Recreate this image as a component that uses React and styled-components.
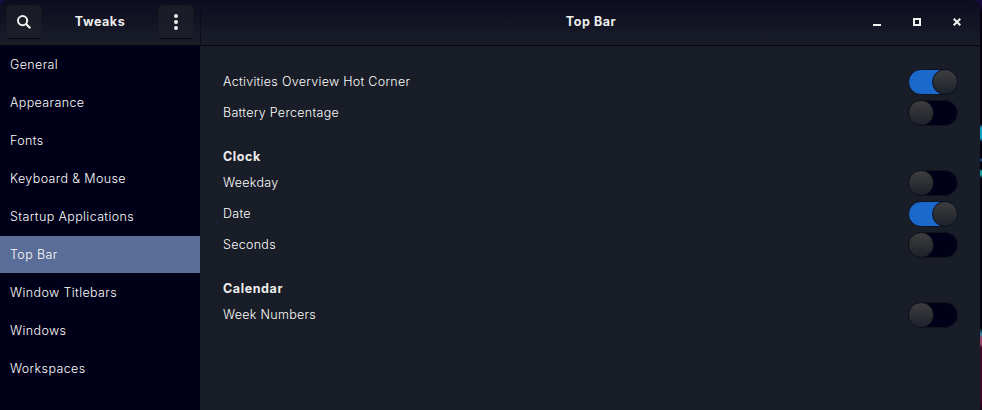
import React, { useState } from "react";
import styled, { createGlobalStyle } from "styled-components";

const GlobalStyle = createGlobalStyle`
  *, *::before, *::after { box-sizing: border-box; }
  body {
    margin: 0;
    overflow: hidden;
    background: #04000a;
    font: 300 12.5px/18px Inter, "Noto Sans", sans-serif;
    letter-spacing: 0.29px;
    color: #fcfcfa;
  }
`;

const Desktop = styled.div`
  display: flex;
  height: 410px;
  width: 982px;
  background: linear-gradient(
    #1a0a43 0 4px, #06000e 12px 124px, #12a0c8 128px 138px, #04000e 142px 158px,
    #1a60a8 160px, #04000e 162px 169px, #12a0a0 171px 175px, #04000e 178px 328px,
    #3080a8 334px, #9a4468 338px 344px, #3c0a22 348px 400px, #1c0618
  );
`;

const Window = styled.main`
  display: grid;
  grid-template: 46px 1fr / 200px 1fr;
  width: 980px;
  height: 410px;
  border-radius: 8px 8px 0 0;
  overflow: hidden;
  background: #191d28;
`;

const HeaderBar = styled.header`
  display: flex;
  align-items: flex-start;
  height: 46px;
  padding: ${(p) => (p.$main ? "5px 14px 0 0" : "5px 6px 0")};
  border-bottom: 1px solid #06070c;
  border-left: ${(p) => (p.$main ? "1px solid #0c0d16" : "0")};
  background: linear-gradient(#0c0c20, #191d28);
`;

const Title = styled.h1`
  flex: 1;
  margin: 0;
  padding: 8px 0 0 ${(p) => p.$inset || 0}px;
  font-size: 12.5px;
  font-weight: 700;
  letter-spacing: 0.55px;
  color: #eeeeec;
  text-align: center;
`;

const HeaderButton = styled.button`
  display: grid;
  place-items: center;
  width: 36px;
  height: 34px;
  padding: 0;
  border: 1px solid #151721;
  border-bottom-color: #05060b;
  border-radius: 4px;
  background: linear-gradient(#191b27, #1b1f29);
  color: #eeeeec;
`;

const WindowControls = styled.div`
  display: flex;
  gap: 22px;
  padding-top: 5px;
`;

const WindowButton = styled.button`
  display: grid;
  place-items: center;
  width: 18px;
  height: 24px;
  padding: 0;
  border: 0;
  background: none;
  color: #f2f2f0;
`;

const Sidebar = styled.nav`
  display: flex;
  flex-direction: column;
  gap: 1px;
  letter-spacing: 0.38px;
  background: #000018;
`;

const SidebarItem = styled.button`
  height: 37px;
  padding: 0 10px;
  border: 0;
  background: ${(p) => (p.$selected ? "#5a6d98" : "transparent")};
  color: inherit;
  font: inherit;
  letter-spacing: inherit;
  text-align: left;
`;

const Content = styled.section`
  display: flex;
  flex-direction: column;
  gap: 17px;
  padding: 23px 22px 0 23px;
`;

const Group = styled.div`
  display: flex;
  flex-direction: column;
  gap: 5px;
`;

const GroupTitle = styled.h2`
  height: 22px;
  margin: 0;
  padding-top: 5px;
  font-size: 12.5px;
  font-weight: 700;
  letter-spacing: 0.6px;
  color: #eeeeec;
`;

const SettingRow = styled.div`
  display: flex;
  align-items: center;
  justify-content: space-between;
  height: 26px;
`;

const Switch = styled.button`
  display: flex;
  justify-content: ${(p) => (p.$on ? "flex-end" : "flex-start")};
  width: 50px;
  height: 26px;
  padding: 0;
  border: 1px solid ${(p) => (p.$on ? "#0b1424" : "#11131b")};
  border-radius: 13px;
  background: ${(p) => (p.$on ? "#1b6acb" : "#000018")};
`;

const Knob = styled.span`
  width: 26px;
  height: 26px;
  margin: -1px;
  border: 1px solid ${(p) => (p.$on ? "#0b1120" : "#11131a")};
  border-radius: 50%;
  background: linear-gradient(#3e3e3e, #1d212b);
`;

const SearchIcon = () => (
  <svg width="16" height="16" viewBox="0 0 16 16" fill="none" stroke="currentColor">
    <circle cx="6.6" cy="6.6" r="4.6" strokeWidth="2" />
    <path d="M10 10l4.3 4.3" strokeWidth="2.2" />
  </svg>
);

const MenuIcon = () => (
  <svg width="16" height="16" viewBox="0 0 16 16" fill="currentColor">
    <circle cx="8" cy="2" r="2" />
    <circle cx="8" cy="8" r="2" />
    <circle cx="8" cy="14" r="2" />
  </svg>
);

const controlPaths = {
  Minimize: <path d="M0 6h8v2H0z" />,
  Maximize: <path fillRule="evenodd" d="M0 0h8v8H0zM2 2v4h4V2z" />,
  Close: <path d="M0.7 0.7L7.3 7.3M7.3 0.7L0.7 7.3" stroke="currentColor" strokeWidth="2" />,
};

const pages = ["General", "Appearance", "Fonts", "Keyboard & Mouse", "Startup Applications", "Top Bar", "Window Titlebars", "Windows", "Workspaces"];

const groups = [
  { items: ["Activities Overview Hot Corner", "Battery Percentage"] },
  { title: "Clock", items: ["Weekday", "Date", "Seconds"] },
  { title: "Calendar", items: ["Week Numbers"] },
];

export default function App() {
  const [page, setPage] = useState("Top Bar");
  const [enabled, setEnabled] = useState({ "Activities Overview Hot Corner": true, Date: true });
  const toggle = (name) => setEnabled((s) => ({ ...s, [name]: !s[name] }));

  return (
    <Desktop>
      <GlobalStyle />
      <Window>
        <HeaderBar>
          <HeaderButton aria-label="Search"><SearchIcon /></HeaderButton>
          <Title>Tweaks</Title>
          <HeaderButton aria-label="Menu"><MenuIcon /></HeaderButton>
        </HeaderBar>
        <HeaderBar $main>
          <Title $inset={113}>{page}</Title>
          <WindowControls>
            {Object.entries(controlPaths).map(([name, path]) => (
              <WindowButton key={name} aria-label={name}>
                <svg width="8" height="8" viewBox="0 0 8 8" fill="currentColor">{path}</svg>
              </WindowButton>
            ))}
          </WindowControls>
        </HeaderBar>
        <Sidebar>
          {pages.map((name) => (
            <SidebarItem key={name} $selected={name === page} onClick={() => setPage(name)}>{name}</SidebarItem>
          ))}
        </Sidebar>
        <Content>
          {groups.map(({ title, items }) => (
            <Group key={items[0]}>
              {title && <GroupTitle>{title}</GroupTitle>}
              {items.map((name) => (
                <SettingRow key={name}>
                  <span>{name}</span>
                  <Switch role="switch" aria-label={name} aria-checked={!!enabled[name]} $on={enabled[name]} onClick={() => toggle(name)}>
                    <Knob $on={enabled[name]} />
                  </Switch>
                </SettingRow>
              ))}
            </Group>
          ))}
        </Content>
      </Window>
    </Desktop>
  );
}
